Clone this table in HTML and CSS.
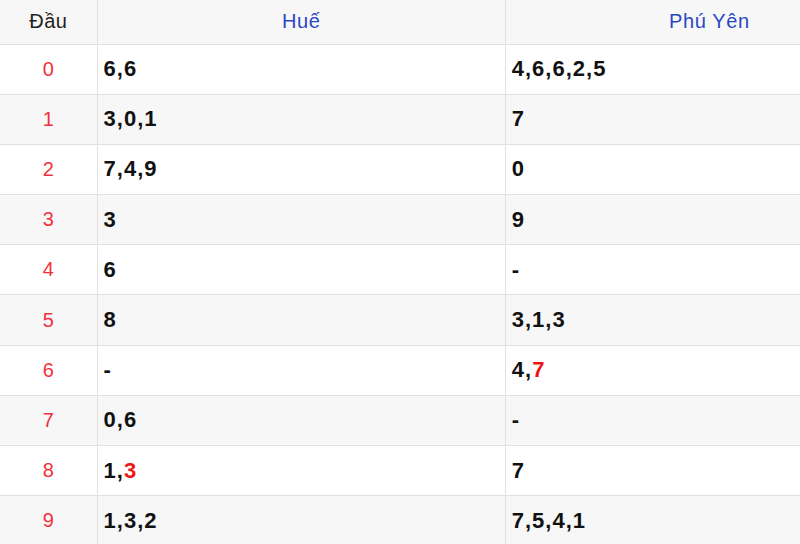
FILE: index.html
```html
<!DOCTYPE html>
<html lang="vi">
<head>
<meta charset="utf-8">
<title>Lô tô đầu</title>
<link rel="stylesheet" href="styles.css">
</head>
<body>
<div class="frame">
<table class="loto">
  <colgroup>
    <col class="c-head">
    <col class="c-prov">
    <col class="c-prov">
  </colgroup>
  <thead>
    <tr>
      <th class="h-dau">Đầu</th>
      <th class="h-prov">Huế</th>
      <th class="h-prov">Phú Yên</th>
    </tr>
  </thead>
  <tbody>
    <tr><td class="dau">0</td><td class="num">6,6</td><td class="num">4,6,6,2,5</td></tr>
    <tr><td class="dau">1</td><td class="num">3,0,1</td><td class="num">7</td></tr>
    <tr><td class="dau">2</td><td class="num">7,4,9</td><td class="num">0</td></tr>
    <tr><td class="dau">3</td><td class="num">3</td><td class="num">9</td></tr>
    <tr><td class="dau">4</td><td class="num">6</td><td class="num">-</td></tr>
    <tr><td class="dau">5</td><td class="num">8</td><td class="num">3,1,3</td></tr>
    <tr><td class="dau">6</td><td class="num">-</td><td class="num">4,<span class="hit">7</span></td></tr>
    <tr><td class="dau">7</td><td class="num">0,6</td><td class="num">-</td></tr>
    <tr><td class="dau">8</td><td class="num">1,<span class="hit">3</span></td><td class="num">7</td></tr>
    <tr><td class="dau">9</td><td class="num">1,3,2</td><td class="num">7,5,4,1</td></tr>
  </tbody>
</table>
</div>
</body>
</html>
```
FILE: styles.css
```css
html, body {
  margin: 0;
  padding: 0;
  background: #ffffff;
}

body {
  font-family: "Liberation Sans", Arial, sans-serif;
}

.frame {
  width: 800px;
  height: 544px;
  overflow: hidden;
}

.loto {
  border-collapse: collapse;
  width: 914px;
  table-layout: fixed;
}

.c-head { width: 97px; }
.c-prov { width: 408px; }

.loto th,
.loto td {
  border: 1px solid #e1e1e1;
  padding: 0;
  vertical-align: middle;
}

.loto tr:first-child th { border-top: none; }
.loto th:first-child,
.loto td:first-child { border-left: none; }

.loto thead tr {
  height: 44px;
  background: #f7f7f7;
}

.loto tbody tr {
  height: 50.2px;
}

.loto tbody tr:nth-child(even) {
  background: #f7f7f7;
}

.loto .h-dau {
  font-weight: normal;
  font-size: 20px;
  letter-spacing: 0.4px;
  color: #222222;
  text-align: center;
}

.loto .h-prov {
  font-weight: normal;
  font-size: 20px;
  letter-spacing: 0.6px;
  color: #2a48c4;
  text-align: center;
}

.loto .dau {
  text-align: center;
  font-size: 20px;
  color: #f2313b;
}

.loto .num {
  font-weight: bold;
  font-size: 22px;
  letter-spacing: 1px;
  color: #111111;
  padding-left: 6px;
}

.hit {
  color: #f01414;
}
```
